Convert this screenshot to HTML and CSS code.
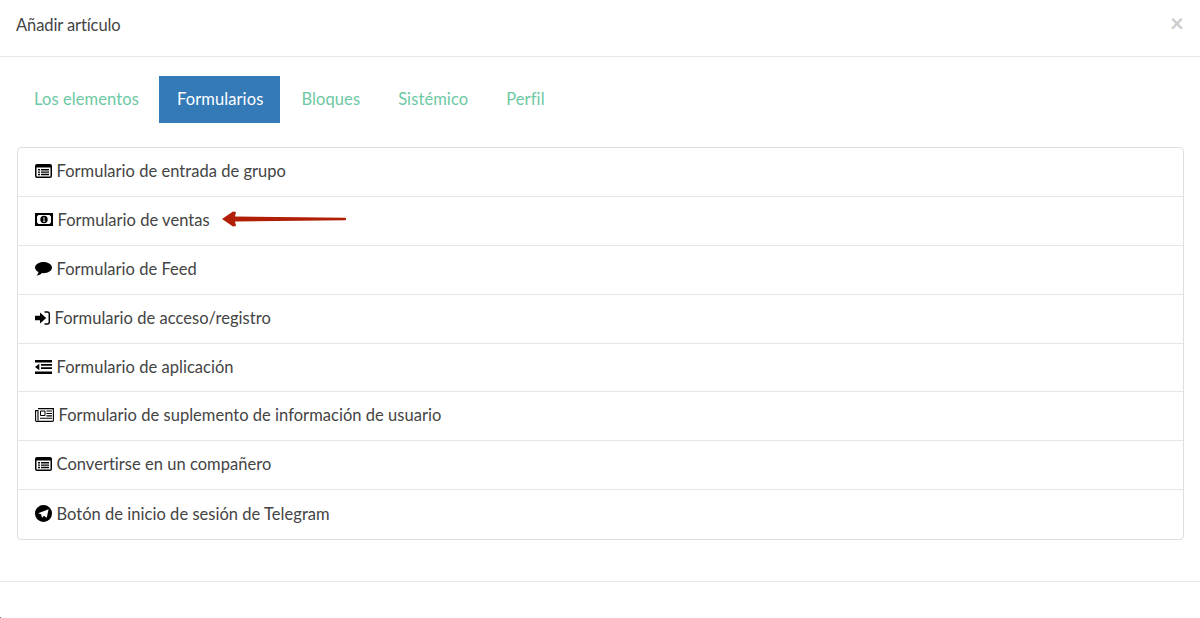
FILE: index.html
```html
<!DOCTYPE html>
<html lang="es">
<head>
<meta charset="utf-8">
<title>Añadir artículo</title>
<link rel="stylesheet" href="styles.css">
</head>
<body>
<div class="modal">
  <header class="modal-header">
    <h4 class="modal-title">Añadir artículo</h4>
    <span class="close">×</span>
  </header>
  <div class="modal-body">
    <nav class="tabs">
      <a class="tab">Los elementos</a>
      <a class="tab active">Formularios</a>
      <a class="tab">Bloques</a>
      <a class="tab">Sistémico</a>
      <a class="tab">Perfil</a>
    </nav>
    <ul class="list">
      <li class="row">
        <svg class="icon w17" viewBox="0 0 17 14"><path fill-rule="evenodd" d="M2 0h13a2 2 0 0 1 2 2v10a2 2 0 0 1-2 2H2a2 2 0 0 1-2-2V2a2 2 0 0 1 2-2zM1.500 3.500V12a.5.5 0 0 0 .5.5h13a.5.5 0 0 0 .5-.5V3.500zM3 5h2v1.400H3zM6 5h8v1.400H6zM3 7.400h2v1.400H3zM6 7.400h8v1.400H6zM3 9.800h2v1.400H3zM6 9.800h8v1.400H6z"/></svg>
        <span>Formulario de entrada de grupo</span>
      </li>
      <li class="row">
        <svg class="icon w18" viewBox="0 0 18 13"><path fill-rule="evenodd" d="M0 0h18v13H0zM3.500 2 2 3.500v6L3.500 11h11l1.500-1.500v-6L14.500 2zM9 2.800a3.700 3.700 0 1 1 0 7.400 3.700 3.700 0 0 1 0-7.400zM7.900 4.400v.8h.7v2.700h-.7v.8h2.300v-.8h-.7V4.400z"/></svg>
        <span>Formulario de ventas</span>
        <svg class="arrow" viewBox="0 0 124 18"><path fill="#b01e06" d="M0 9 11 1.500l3 .5-1 4.500 110 1.300a1.200 1.200 0 0 1 0 2.400L13 11.500l1 4.500-3 .5z"/></svg>
      </li>
      <li class="row">
        <svg class="icon w17" viewBox="0 0 17 14"><path d="M8.500 0C3.800 0 0 2.500 0 5.600c0 1.900 1.400 3.500 3.500 4.500-.2 1.300-.9 2.600-2 3.600 2.200-.2 4.200-1.300 5.500-2.600.5.100 1 .1 1.500.1 4.700 0 8.500-2.500 8.500-5.600S13.200 0 8.500 0z"/></svg>
        <span>Formulario de Feed</span>
      </li>
      <li class="row">
        <svg class="icon w15" viewBox="0 0 15 14"><path d="M0 4.800h5V1.500L11.200 7 5 12.500V9.200H0z"/><path fill="none" stroke="#000" stroke-width="1.500" d="M9.500 1h3A1.800 1.800 0 0 1 14.300 2.800v8.400A1.800 1.800 0 0 1 12.500 13h-3"/></svg>
        <span>Formulario de acceso/registro</span>
      </li>
      <li class="row">
        <svg class="icon w17" viewBox="0 0 17 14"><path d="M0 0h17v2.400H0zM6 3.900h11v1.800H6zM6 7.300h11v1.800H6zM0 11.600h17V14H0zM4.300 3.800v6.400L0 7z"/></svg>
        <span>Formulario de aplicación</span>
      </li>
      <li class="row">
        <svg class="icon w19" viewBox="0 0 19 14"><path fill="none" stroke="#000" stroke-width="1.100" d="M3 .6h15.400v11.900a.9.900 0 0 1-.9.900H1.500a.9.900 0 0 1-.9-.9V2.600H3v10"/><path fill="none" stroke="#000" stroke-width="1" d="M5.500 3h4.500v4.500H5.500z"/><path d="M11.500 2.500h5.500v1.100h-5.500zM11.500 5h5.500v1.100h-5.500zM11.500 7.300h5.500v1.100h-5.500zM5 9.700h12v1.100H5z"/></svg>
        <span>Formulario de suplemento de información de usuario</span>
      </li>
      <li class="row">
        <svg class="icon w17" viewBox="0 0 17 14"><path fill-rule="evenodd" d="M2 0h13a2 2 0 0 1 2 2v10a2 2 0 0 1-2 2H2a2 2 0 0 1-2-2V2a2 2 0 0 1 2-2zM1.500 3.500V12a.5.5 0 0 0 .5.5h13a.5.5 0 0 0 .5-.5V3.500zM3 5h2v1.400H3zM6 5h8v1.400H6zM3 7.400h2v1.400H3zM6 7.400h8v1.400H6zM3 9.800h2v1.400H3zM6 9.800h8v1.400H6z"/></svg>
        <span>Convertirse en un compañero</span>
      </li>
      <li class="row">
        <svg class="icon w17 tall" viewBox="0 0 16 16"><path fill-rule="evenodd" d="M8 0a8 8 0 1 1 0 16A8 8 0 0 1 8 0zM3 7.700l2.700 1 1 3.200 1.700-1.900 2.600 1.900L12.800 4z"/></svg>
        <span>Botón de inicio de sesión de Telegram</span>
      </li>
    </ul>
  </div>
  <footer class="modal-footer"></footer>
</div>
<span class="corner"></span>
</body>
</html>
```

FILE: styles.css
```css
* { box-sizing: border-box; }
html, body { margin: 0; padding: 0; height: 100%; overflow: hidden; background: #fff; }
body {
  font-family: "Lato", "Open Sans", sans-serif;
  font-size: 16.500px;
  font-variant-ligatures: none;
  letter-spacing: .03px;
  color: #444;
}
.modal { display: flex; flex-direction: column; }
.modal-header {
  height: 57px;
  border-bottom: 1px solid #e8e8e8;
  padding: 0 16px;
  display: flex;
  align-items: center;
  justify-content: space-between;
}
.modal-title { margin: 0 0 6px; font-weight: 400; font-size: 16.500px; letter-spacing: -.1px; color: #444; }
.close { font-size: 24px; font-weight: 700; line-height: 1; color: #cdcdcd; margin-top: -11px; }
.modal-body { padding: 19px 16px 0; }
.tabs { display: flex; gap: 3px; height: 47px; }
.tab {
  padding: 0 17px 2px 18px;
  display: flex;
  align-items: center;
  color: #6dc8a3;
  letter-spacing: .1px;
}
.tab.active { background: #337ab7; color: #fff; }
.list {
  list-style: none;
  margin: 24px 0 0 1px;
  padding: 0;
  border: 1px solid #dfdfdf;
  border-radius: 4px;
}
.row {
  position: relative;
  height: 48.900px;
  padding: 0 17px 2px;
  display: flex;
  align-items: center;
  gap: 4.500px;
  border-bottom: 1px solid #e6e6e6;
}
.row:last-child { border-bottom: 0; }
.icon { flex: none; height: 14px; fill: #000; }
.w15 { width: 15px; }
.w17 { width: 17px; }
.w18 { width: 18px; height: 13px; }
.w19 { width: 19px; }
.tall { height: 17px; }
.arrow { position: absolute; left: 204px; top: 13px; width: 124px; height: 18px; }
.modal-footer { margin-top: 41px; border-top: 1px solid #e8e8e8; }
.corner { position: absolute; left: 0; bottom: 0; width: 1px; height: 1px; background: #777; }
```
